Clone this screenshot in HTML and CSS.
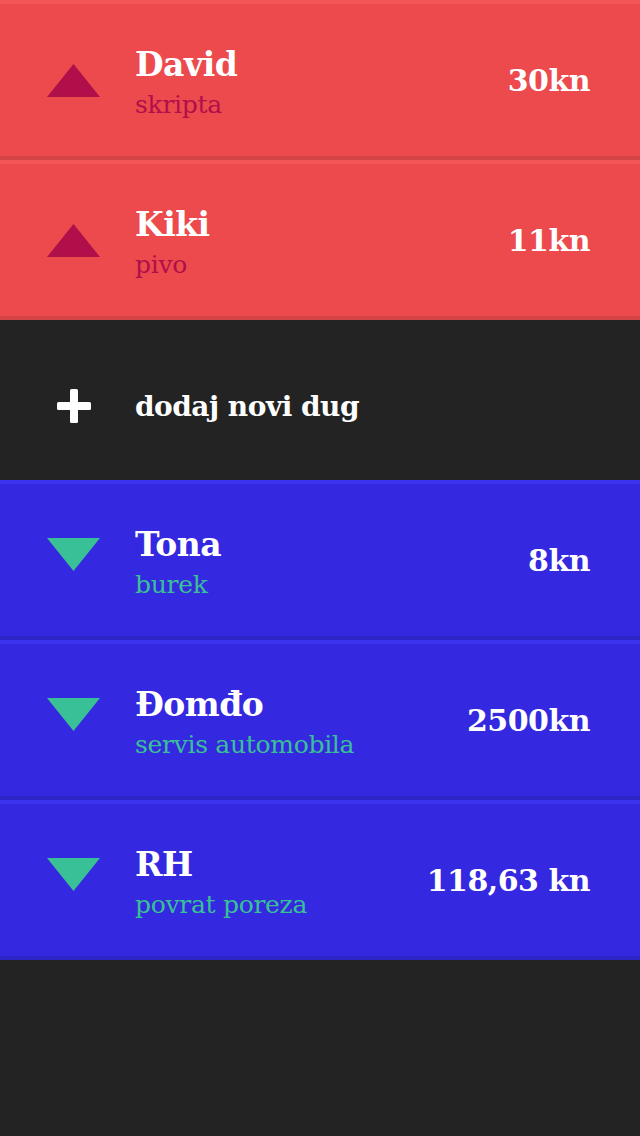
FILE: index.html
```html
<!DOCTYPE html>
<html lang="hr">
<head>
<meta charset="utf-8">
<title>Dugovi</title>
<link rel="stylesheet" href="styles.css">
</head>
<body>
<main class="list">
  <div class="row row--owe">
    <div class="icon"><svg class="tri tri--up" viewBox="0 0 53 33" width="53" height="33"><polygon points="26.5,0 53,33 0,33"/></svg></div>
    <div class="text"><div class="name">David</div><div class="note">skripta</div></div>
    <div class="amount">30kn</div>
  </div>
  <div class="row row--owe">
    <div class="icon"><svg class="tri tri--up" viewBox="0 0 53 33" width="53" height="33"><polygon points="26.5,0 53,33 0,33"/></svg></div>
    <div class="text"><div class="name">Kiki</div><div class="note">pivo</div></div>
    <div class="amount">11kn</div>
  </div>
  <div class="add">
    <div class="icon"><svg class="plus" viewBox="0 0 34 34" width="34" height="34"><rect x="13" y="0" width="8" height="34" rx="1.5"/><rect x="0" y="13" width="34" height="8" rx="1.5"/></svg></div>
    <div class="add-label">dodaj novi dug</div>
  </div>
  <div class="row row--owed">
    <div class="icon"><svg class="tri tri--down" viewBox="0 0 53 33" width="53" height="33"><polygon points="0,0 53,0 26.5,33"/></svg></div>
    <div class="text"><div class="name">Tona</div><div class="note">burek</div></div>
    <div class="amount">8kn</div>
  </div>
  <div class="row row--owed">
    <div class="icon"><svg class="tri tri--down" viewBox="0 0 53 33" width="53" height="33"><polygon points="0,0 53,0 26.5,33"/></svg></div>
    <div class="text"><div class="name">Đomđo</div><div class="note">servis automobila</div></div>
    <div class="amount">2500kn</div>
  </div>
  <div class="row row--owed">
    <div class="icon"><svg class="tri tri--down" viewBox="0 0 53 33" width="53" height="33"><polygon points="0,0 53,0 26.5,33"/></svg></div>
    <div class="text"><div class="name">RH</div><div class="note">povrat poreza</div></div>
    <div class="amount">118,63 kn</div>
  </div>
</main>
</body>
</html>
```
FILE: styles.css
```css
html, body {
  margin: 0;
  padding: 0;
}
body {
  background: #232323;
  width: 640px;
  height: 1136px;
  overflow: hidden;
  font-family: "DejaVu Serif", "Liberation Serif", serif;
  color: #ffffff;
}
.list {
  display: flex;
  flex-direction: column;
}
.row {
  height: 152px;
  display: flex;
  align-items: center;
  padding-right: 50px;
  border-top: 4px solid;
  border-bottom: 4px solid;
}
.row--owe {
  background: #ec4a4c;
  border-top-color: #f45657;
  border-bottom-color: #d54446;
}
.row--owed {
  background: #3428e0;
  border-top-color: #3b34ef;
  border-bottom-color: #2e25c6;
}
.icon {
  width: 135px;
  flex: none;
  display: flex;
  justify-content: flex-start;
  padding-left: 47px;
  box-sizing: border-box;
}
.tri--up { fill: #b00f4a; }
.tri--down { fill: #3ac096; margin-top: -12px; }
.plus { fill: #ffffff; margin-left: 10px; }
.text {
  flex: 1;
  display: flex;
  flex-direction: column;
  margin-top: 6px;
}
.name {
  font-size: 33px;
  line-height: 40px;
  font-weight: bold;
  letter-spacing: -0.5px;
}
.note {
  font-size: 25px;
  line-height: 34px;
  margin-top: 3px;
  letter-spacing: -0.3px;
}
.row--owe .note { color: #b00f4a; }
.row--owed .note { color: #3ac096; }
.amount {
  font-size: 30px;
  font-weight: bold;
  letter-spacing: -0.5px;
}
.add {
  height: 160px;
  box-sizing: border-box;
  padding-top: 12px;
  display: flex;
  align-items: center;
}
.add-label {
  font-size: 28px;
  font-weight: bold;
  letter-spacing: -0.5px;
}
```
